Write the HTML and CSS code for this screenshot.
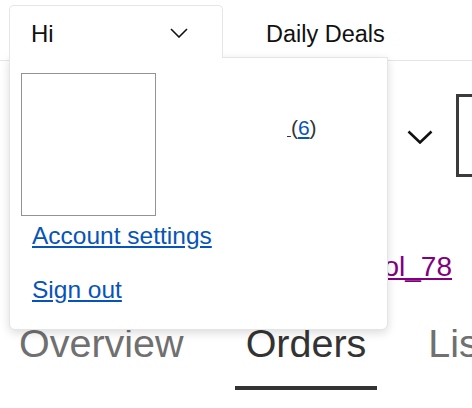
FILE: index.html
```html
<!DOCTYPE html>
<html lang="en">
<head>
<meta charset="utf-8">
<title>My eBay</title>
<link rel="stylesheet" href="styles.css">
</head>
<body>
<header class="header">
  <div class="hi-tab">
    <span class="hi-text">Hi</span>
    <svg class="hi-chev" width="18" height="10" viewBox="0 0 18 10"><polyline points="1,1 9,9 17,1" fill="none" stroke="#111" stroke-width="1.6"/></svg>
  </div>
  <a class="deals">Daily Deals</a>
</header>

<div class="menu">
  <div class="menu-top">
    <div class="avatar"></div>
    <div class="user"><a class="uname">&nbsp;</a>(<a class="score">6</a>)</div>
  </div>
  <a class="menu-link first">Account settings</a>
  <a class="menu-link">Sign out</a>
</div>

<main class="main">
  <div class="profile-row">
    <svg class="big-chev" width="26" height="14" viewBox="0 0 26 14"><polyline points="1.5,1.5 13,12.5 24.5,1.5" fill="none" stroke="#111" stroke-width="2.6"/></svg>
    <div class="box"></div>
  </div>
  <div class="user-row"><a class="visited">shopcool_78</a></div>
  <nav class="tabs">
    <span class="tab">Overview</span>
    <span class="tab active">Orders</span>
    <span class="tab">Lists</span>
  </nav>
</main>
</body>
</html>
```
FILE: styles.css
```css
html, body {
  margin: 0;
  padding: 0;
  background: #fff;
  overflow: hidden;
  font-family: "Liberation Sans", Arial, sans-serif;
  color: #111;
}

.header {
  box-sizing: border-box;
  height: 61px;
  display: flex;
  align-items: flex-start;
  border-bottom: 1px solid #e5e5e5;
}

.hi-tab {
  position: relative;
  z-index: 2;
  box-sizing: border-box;
  margin-top: 5px;
  margin-left: 9px;
  width: 214px;
  height: 53px;
  padding: 14px 34px 0 21px;
  display: flex;
  justify-content: space-between;
  align-items: flex-start;
  background: #fff;
  border: 1px solid #e5e5e5;
  border-bottom: none;
  border-radius: 5px 5px 0 0;
}

.hi-text {
  font-size: 24px;
  line-height: 28px;
}

.hi-chev {
  margin-top: 8px;
}

.deals {
  margin-left: 43px;
  margin-top: 20px;
  font-size: 23.5px;
  line-height: 28px;
  color: #111;
}

.menu {
  position: absolute;
  z-index: 1;
  top: 57px;
  left: 9px;
  box-sizing: border-box;
  width: 379px;
  height: 273px;
  background: #fff;
  border: 1px solid #e5e5e5;
  border-radius: 0 0 6px 6px;
  box-shadow: 0 3px 10px rgba(0, 0, 0, 0.14);
  display: flex;
  flex-direction: column;
  align-items: flex-start;
}

.menu-top {
  display: flex;
  align-items: flex-start;
  padding: 15px 0 0 11px;
}

.avatar {
  box-sizing: border-box;
  width: 135px;
  height: 143px;
  border: 1px solid #939393;
}

.user {
  margin-left: 131px;
  margin-top: 43px;
  font-size: 21px;
  line-height: 24px;
  color: #333;
}

.uname {
  color: #333;
  text-decoration: underline;
  font-size: 14px;
}

.score {
  color: #0654ba;
  text-decoration: underline;
}

.menu-link {
  margin-left: 22px;
  font-size: 24.5px;
  line-height: 28px;
  color: #0654ba;
  text-decoration: underline;
  text-underline-offset: 2px;
}

.menu-link.first {
  margin-top: 6px;
}

.menu-link + .menu-link {
  margin-top: 26px;
}

.main {
  display: flex;
  flex-direction: column;
}

.profile-row {
  margin-top: 33px;
  height: 83px;
  display: flex;
  justify-content: flex-end;
  align-items: center;
  gap: 23px;
}

.big-chev {
  margin-top: 3px;
}

.box {
  box-sizing: border-box;
  width: 80px;
  height: 83px;
  margin-right: -64px;
  border: 3px solid #3b3b3b;
}

.user-row {
  margin-top: 74px;
  padding-right: 20px;
  text-align: right;
  font-size: 28px;
  line-height: 32px;
}

.visited {
  color: #800080;
  text-decoration: underline;
}

.tabs {
  margin-top: 38px;
  padding-left: 8px;
  display: flex;
  gap: 40px;
  white-space: nowrap;
}

.tab {
  padding: 0 11px 21px;
  font-size: 39.5px;
  line-height: 44px;
  color: #707070;
  border-bottom: 4px solid transparent;
}

.tab.active {
  color: #333;
  border-bottom-color: #333;
}
```
